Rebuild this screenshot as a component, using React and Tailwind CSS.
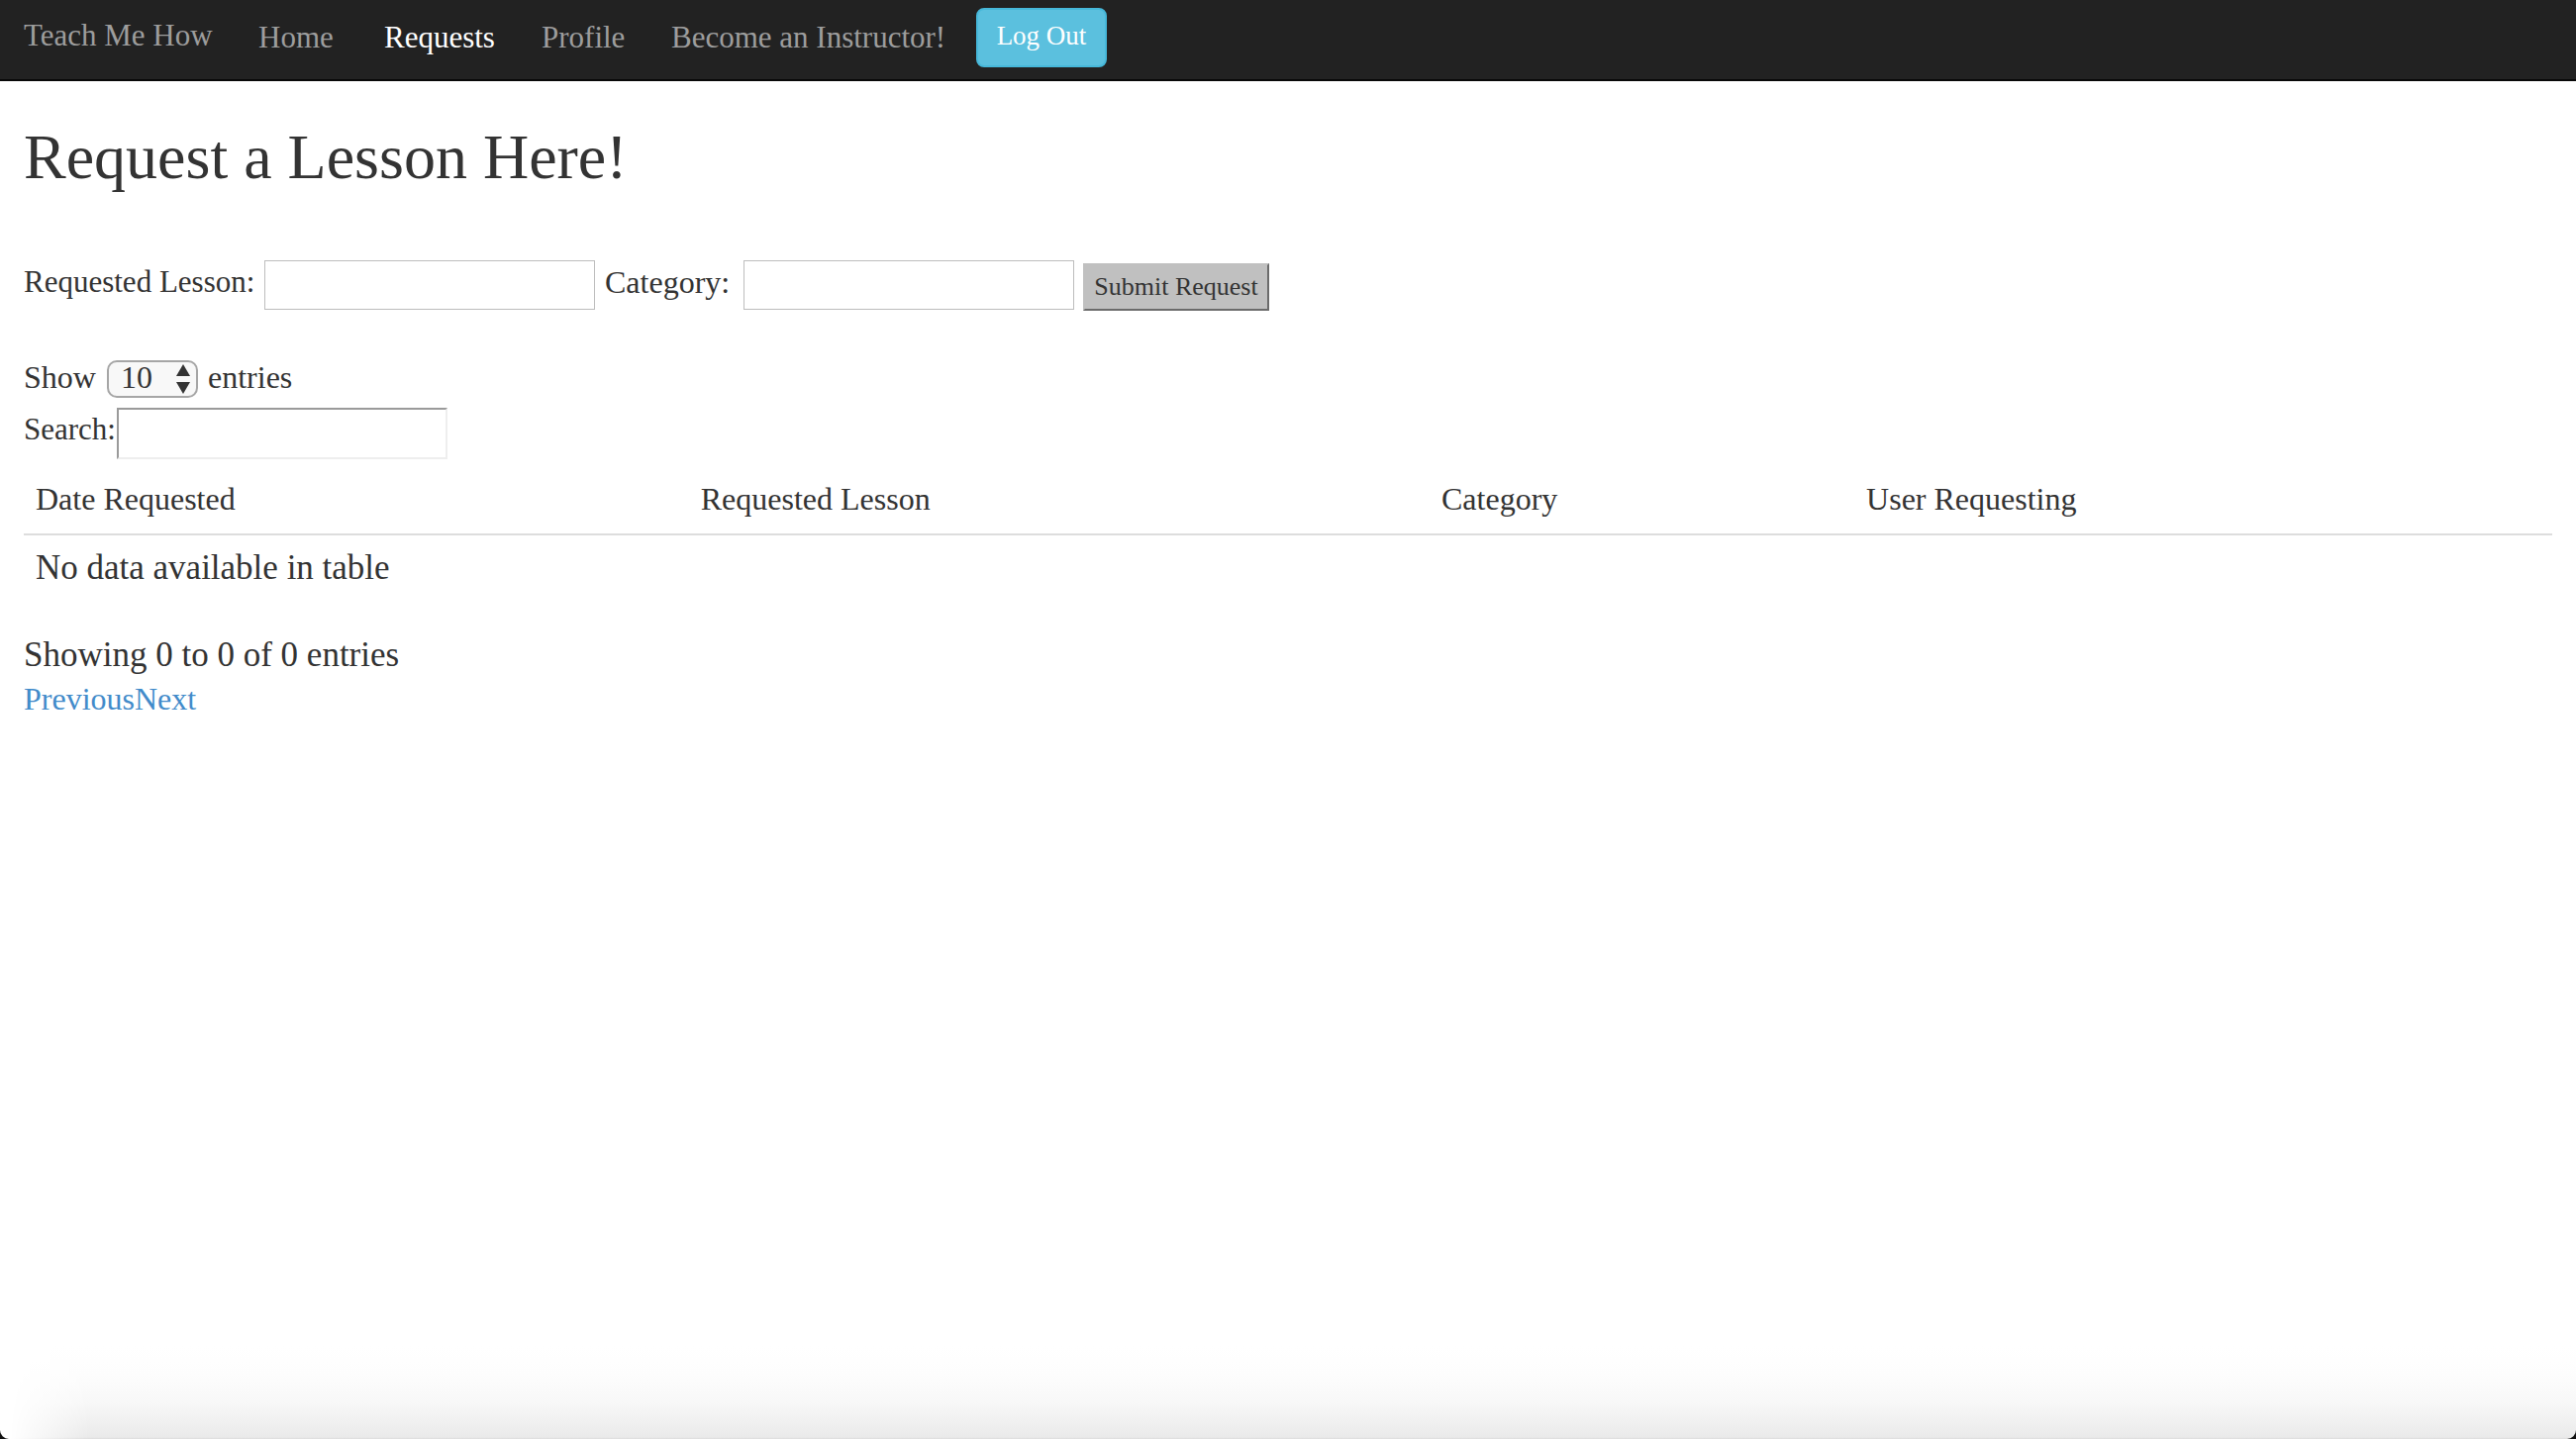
import React from "react";

const links = [
  { label: "Home", width: "min-w-[127px]", color: "text-[#9d9d9d]" },
  { label: "Requests", width: "min-w-[159px]", color: "text-white" },
  { label: "Profile", width: "min-w-[131px]", color: "text-[#9d9d9d]" },
  { label: "Become an Instructor!", width: "min-w-[308px]", color: "text-[#9d9d9d]" },
];

function NavBar() {
  return (
    <nav className="flex h-[82px] items-start border-b-2 border-[#080808] bg-[#222222] pl-6 text-[31px] leading-[40px]">
      <a href="#" className="min-w-[237px] pt-[16px] text-[#9d9d9d]">
        Teach Me How
      </a>
      <ul className="flex">
        {links.map((link) => (
          <li key={link.label} className={link.width}>
            <a href="#" className={"block pt-[18px] " + link.color}>
              {link.label}
            </a>
          </li>
        ))}
      </ul>
      <button
        type="button"
        className="mt-2 h-[60px] w-[132px] rounded-[8px] border-2 border-[#46b8da] bg-[#5bc0de] pb-1 text-[27px] leading-[40px] text-white"
      >
        Log Out
      </button>
    </nav>
  );
}

function RequestForm() {
  return (
    <form className="mt-[56px] flex items-start" onSubmit={(e) => e.preventDefault()}>
      <label htmlFor="lesson" className="min-w-[243px] text-[31px] leading-[44px]">
        Requested Lesson:
      </label>
      <input id="lesson" type="text" className="h-[50px] w-[334px] border border-[#bdbdbd] bg-white px-2" />
      <label htmlFor="category" className="ml-[10px] min-w-[140px] leading-[44px]">
        Category:
      </label>
      <input id="category" type="text" className="h-[50px] w-[334px] border border-[#bdbdbd] bg-white px-2" />
      <button
        type="submit"
        className="mt-[3px] ml-[9px] h-12 w-[188px] border-2 border-t-[#c0c0c0] border-r-[#6b6b6b] border-b-[#6b6b6b] border-l-[#c0c0c0] bg-[#c0c0c0] text-[26px] leading-[40px]"
      >
        Submit Request
      </button>
    </form>
  );
}

function TableControls() {
  return (
    <div className="mt-[45px]">
      <div className="flex h-[53px] items-start">
        <label htmlFor="length" className="min-w-[84px] leading-[44px]">
          Show
        </label>
        <div className="relative mt-[5px]">
          <select
            id="length"
            defaultValue="10"
            className="block h-[38px] w-[92px] appearance-none rounded-[10px] border-2 border-[#a6a6a6] bg-[#f8f8f8] pb-1 pl-3 leading-[30px]"
          >
            <option>10</option>
            <option>25</option>
            <option>50</option>
            <option>100</option>
          </select>
          <svg viewBox="0 0 14 30" className="pointer-events-none absolute top-1 right-2 h-[30px] w-[14px]" fill="#333333">
            <path d="M7 0L14 12H0Z" />
            <path d="M0 18H14L7 30Z" />
          </svg>
        </div>
        <span className="ml-[10px] leading-[44px]">entries</span>
      </div>
      <div className="flex items-start">
        <label htmlFor="search" className="min-w-[94px] text-[31px] leading-[44px]">
          Search:
        </label>
        <input
          id="search"
          type="search"
          className="h-[52px] w-[334px] appearance-none border-2 border-t-[#9a9a9a] border-r-[#eeeeee] border-b-[#eeeeee] border-l-[#9a9a9a] bg-white px-2"
        />
      </div>
    </div>
  );
}

function RequestsTable() {
  return (
    <table className="mt-[19px] w-full table-fixed border-collapse text-left">
      <thead>
        <tr className="border-b-2 border-[#dddddd]">
          <th className="h-[57px] w-[26.3%] pb-[14px] pl-3 font-normal leading-[42px]">Date Requested</th>
          <th className="w-[29.3%] pb-[14px] pl-3 font-normal leading-[42px]">Requested Lesson</th>
          <th className="w-[16.8%] pb-[14px] pl-3 font-normal leading-[42px]">Category</th>
          <th className="pb-[14px] pl-3 font-normal leading-[42px]">User Requesting</th>
        </tr>
      </thead>
      <tbody>
        <tr>
          <td colSpan={4} className="pt-[11px] pb-[10px] pl-3 text-[35px] leading-[44px]">
            No data available in table
          </td>
        </tr>
      </tbody>
    </table>
  );
}

export default function App() {
  return (
    <div className="relative flex min-h-screen flex-col bg-white font-['Liberation_Serif',serif] text-[32px] text-[#333333]">
      <NavBar />
      <main className="flex-1 px-6">
        <h1 className="mt-[29px] text-[64px] leading-[96px]">Request a Lesson Here!</h1>
        <RequestForm />
        <TableControls />
        <RequestsTable />
        <p className="mt-[34px] text-[35px] leading-[44px]">Showing 0 to 0 of 0 entries</p>
        <div className="flex leading-[44px] text-[#428bca]">
          <a href="#">Previous</a>
          <a href="#">Next</a>
        </div>
      </main>
      <div className="pointer-events-none absolute inset-x-0 bottom-0 h-[94px] overflow-hidden">
        <div className="h-full bg-[linear-gradient(to_bottom,#ffffff_0%,#fdfdfd_30%,#f8f8f8_60%,#eaeaea_98%,#dcdcdc_100%)] [mask-image:linear-gradient(to_right,transparent_10px,black_90px)]" />
        <svg viewBox="0 0 9 9" className="absolute bottom-0 left-0 size-[9px]" fill="#111111">
          <path d="M0 0A9 9 0 0 0 9 9H0Z" />
        </svg>
        <svg viewBox="0 0 9 9" className="absolute right-0 bottom-0 size-[9px]" fill="#111111">
          <path d="M9 0A9 9 0 0 1 0 9H9Z" />
        </svg>
      </div>
    </div>
  );
}
